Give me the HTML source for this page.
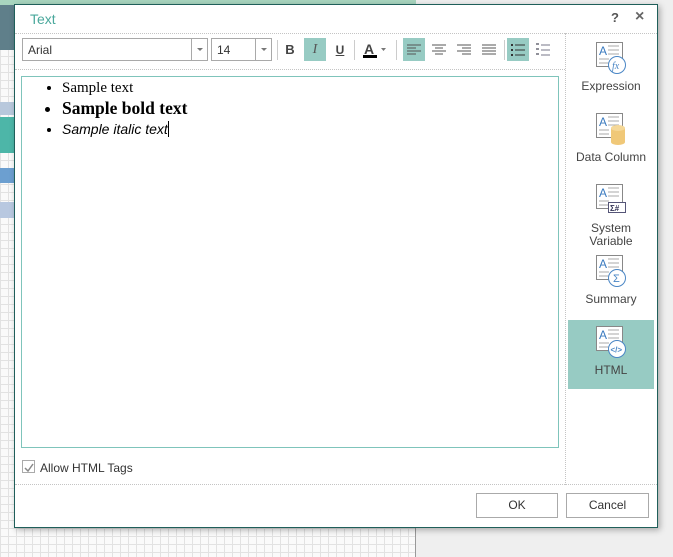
<!DOCTYPE html>
<html><head><meta charset="utf-8"><style>
*{box-sizing:border-box;margin:0;padding:0}
body{width:673px;height:557px;position:relative;overflow:hidden;font-family:"Liberation Sans",Arial,sans-serif;background:#efefef}
.grid{position:absolute;left:0;top:0;width:416px;height:557px;background-color:#fafafa;
background-image:linear-gradient(#e2e2e2 1px,transparent 1px),linear-gradient(90deg,#e2e2e2 1px,transparent 1px);background-size:8px 8px;border-right:1px solid #999}
.band{position:absolute;left:0;width:14px}
.dlg{position:absolute;left:14px;top:4px;width:644px;height:524px;background:#fff;border:1px solid #1f5f5a;box-shadow:2px 2px 6px rgba(0,0,0,.3)}
.title{position:absolute;left:15px;top:6px;color:#4aa89c;font-size:14px}
.hdot{position:absolute;border-top:1px dotted #c4c4c4;height:0}
.vdot{position:absolute;border-left:1px dotted #c4c4c4;width:0}
.sel{position:absolute;top:33px;height:23px;border:1px solid #a9a9a9;font-size:12px;color:#333;padding:4px 0 0 5px}
.sel .ar{position:absolute;right:0;top:0;width:16px;height:21px;border-left:1px solid #a9a9a9}
.sel .ar:after{content:"";position:absolute;left:5px;top:9px;border:3px solid transparent;border-top:3px solid #777}
.btn{position:absolute;top:33px;width:22px;height:23px;display:flex;align-items:center;justify-content:center}
.on{background:#97cbc3}
.sep{position:absolute;top:35px;width:1px;height:20px;background:#ccc}
.ed{position:absolute;left:6px;top:71px;width:538px;height:372px;border:1px solid #7fc4bb;font-family:"Liberation Serif",serif;font-size:15px}
.ed ul{margin:1px 0 0 40px}
.ed li{line-height:20px}
.rp{position:absolute;left:553px;width:86px;text-align:center;font-size:12px;color:#444;line-height:13px}
.rp svg{display:block;margin:0 auto 5px}
.ok{position:absolute;top:488px;height:25px;border:1px solid #aaa;font-size:12px;color:#333;text-align:center;line-height:23px}
</style></head><body>
<div class="grid"></div>
<div class="band" style="top:0;height:5px;width:416px;background:#a8d5bf"></div>
<div class="band" style="top:5px;height:45px;background:#5f7f8a"></div>
<div class="band" style="top:102px;height:13px;background:#b8c8dc"></div>
<div class="band" style="top:117px;height:36px;background:#4db6a8"></div>
<div class="band" style="top:168px;height:15px;background:#6c9fd0"></div>
<div class="band" style="top:202px;height:16px;background:#b8c8e0"></div>

<div class="dlg">
<div class="title">Text</div>
<div style="position:absolute;left:596px;top:5px;font-size:13px;font-weight:bold;color:#555">?</div>
<div style="position:absolute;left:620px;top:3px;font-size:16px;font-weight:bold;color:#666">×</div>
<div class="hdot" style="left:0;top:28px;width:642px"></div>
<div class="sel" style="left:7px;width:186px">Arial<div class="ar"></div></div>
<div class="sel" style="left:196px;width:61px">14<div class="ar"></div></div>
<div class="sep" style="left:262px"></div>
<div class="btn" style="left:264px;font-weight:bold;font-size:13px;color:#444">B</div>
<div class="btn on" style="left:289px;font-style:italic;font-size:14px;color:#555;font-family:'Liberation Serif',serif">I</div>
<div class="btn" style="left:314px;text-decoration:underline;font-weight:bold;font-size:12px;color:#444">U</div>
<div class="sep" style="left:339px"></div>
<div class="btn" style="left:344px;width:30px"><svg width="30" height="23"><text x="5" y="16" font-size="14" font-weight="bold" fill="#444" font-family="Liberation Sans">A</text><rect x="4" y="17" width="14" height="3" fill="#000"/><path d="M22 10h5l-2.5 3z" fill="#777"/></svg></div>
<div class="sep" style="left:381px"></div>
<div class="btn on" style="left:388px"><svg width="14" height="12"><path d="M0 1h14M0 4h9M0 7h14M0 10h9" stroke="#555"/></svg></div>
<div class="btn" style="left:413px"><svg width="14" height="12"><path d="M0 1h14M3 4h8M0 7h14M3 10h8" stroke="#555"/></svg></div>
<div class="btn" style="left:438px"><svg width="14" height="12"><path d="M0 1h14M5 4h9M0 7h14M5 10h9" stroke="#555"/></svg></div>
<div class="btn" style="left:463px"><svg width="14" height="12"><path d="M0 1h14M0 4h14M0 7h14M0 10h14" stroke="#555"/></svg></div>
<div class="sep" style="left:489px"></div>
<div class="btn on" style="left:492px"><svg width="14" height="14"><path d="M4 2h10M4 7h10M4 12h10" stroke="#333"/><path d="M0 2h2M0 7h2M0 12h2" stroke="#333" stroke-width="2"/></svg></div>
<div class="btn" style="left:517px"><svg width="14" height="14"><path d="M5 2h9M5 7h9M5 12h9" stroke="#778"/><path d="M0 1h3M0 6h3M0 11h3" stroke="#223"/></svg></div>
<div class="hdot" style="left:0;top:64px;width:550px"></div>
<div class="vdot" style="left:550px;top:28px;height:452px"></div>

<div class="ed"><ul>
<li>Sample text</li>
<li style="font-weight:bold;font-size:17.5px;line-height:21px">Sample bold text</li>
<li style="font-family:'Liberation Sans',sans-serif;font-style:italic;font-size:14px">Sample italic text<span style="border-left:1px solid #000;margin-left:0"></span></li>
</ul></div>

<div style="position:absolute;left:7px;top:455px;width:13px;height:13px;border:1px solid #aaa"><svg width="11" height="11"><path d="M2 5l3 3 5-7" stroke="#888" fill="none" stroke-width="1.5"/></svg></div>
<div style="position:absolute;left:25px;top:456px;font-size:12px;color:#333">Allow HTML Tags</div>
<div class="hdot" style="left:0;top:479px;width:642px"></div>
<div class="ok" style="left:461px;width:82px">OK</div>
<div class="ok" style="left:551px;width:83px">Cancel</div>

<div class="rp" style="top:36px">
<svg width="34" height="34"><rect x="2.5" y="1.5" width="26" height="24" fill="#fff" stroke="#888"/><text x="5" y="14" font-size="12" fill="#3a7abf" font-family="Liberation Sans">A</text><path d="M14 5h11M14 9h11M14 13h11M5 18h10M5 22h10" stroke="#aaa"/><circle cx="23" cy="24" r="8.5" fill="#fff" stroke="#4a86c5"/><text x="18" y="28" font-size="10" font-style="italic" fill="#4a86c5" font-family="Liberation Serif">fx</text></svg>Expression</div>
<div class="rp" style="top:107px">
<svg width="34" height="34"><rect x="2.5" y="1.5" width="26" height="24" fill="#fff" stroke="#888"/><text x="5" y="14" font-size="12" fill="#3a7abf" font-family="Liberation Sans">A</text><path d="M14 5h11M14 9h11M14 13h11M5 18h10M5 22h10" stroke="#aaa"/><path d="M17 16v14a7 3 0 0 0 14 0v-14z" fill="#f0c878"/><ellipse cx="24" cy="16" rx="7" ry="3" fill="#f5d898"/></svg>Data Column</div>
<div class="rp" style="top:178px">
<svg width="34" height="34"><rect x="2.5" y="1.5" width="26" height="24" fill="#fff" stroke="#888"/><text x="5" y="14" font-size="12" fill="#3a7abf" font-family="Liberation Sans">A</text><path d="M14 5h11M14 9h11M14 13h11M5 18h10M5 22h10" stroke="#aaa"/><rect x="14.5" y="19.5" width="17" height="10" fill="#fff" stroke="#557"/><text x="16" y="28" font-size="8" font-weight="bold" fill="#335">Σ#</text></svg>System<br>Variable</div>
<div class="rp" style="top:249px">
<svg width="34" height="34"><rect x="2.5" y="1.5" width="26" height="24" fill="#fff" stroke="#888"/><text x="5" y="14" font-size="12" fill="#3a7abf" font-family="Liberation Sans">A</text><path d="M14 5h11M14 9h11M14 13h11M5 18h10M5 22h10" stroke="#aaa"/><circle cx="23" cy="24" r="8.5" fill="#fff" stroke="#4a86c5"/><text x="19" y="28" font-size="11" fill="#4a86c5">Σ</text></svg>Summary</div>
<div class="rp on" style="top:315px;left:553px;height:69px;padding-top:5px">
<svg width="34" height="34"><rect x="2.5" y="1.5" width="26" height="24" fill="#fff" stroke="#888"/><text x="5" y="14" font-size="12" fill="#3a7abf" font-family="Liberation Sans">A</text><path d="M14 5h11M14 9h11M14 13h11M5 18h10M5 22h10" stroke="#aaa"/><circle cx="23" cy="24" r="8.5" fill="#fff" stroke="#4a86c5"/><text x="16.5" y="27.5" font-size="8" fill="#4a86c5" font-weight="bold">&lt;/&gt;</text></svg>HTML</div>
</div>
</body></html>
